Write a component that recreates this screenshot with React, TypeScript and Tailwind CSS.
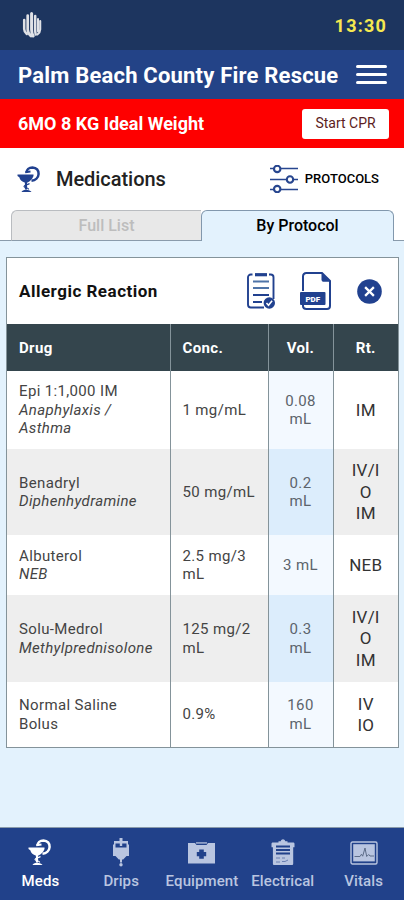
import { ReactNode } from 'react';
import clsx from 'clsx';

type Drug = {
  name: string;
  detail?: string;
  conc: string;
  vol: string;
  routes: string[];
  height: string;
};

type NavItem = {
  label: string;
  icon: ReactNode;
};

const drugs: Drug[] = [
  {
    name: 'Epi 1:1,000 IM',
    detail: 'Anaphylaxis / Asthma',
    conc: '1 mg/mL',
    vol: '0.08 mL',
    routes: ['IM'],
    height: 'h-[78px]',
  },
  {
    name: 'Benadryl',
    detail: 'Diphenhydramine',
    conc: '50 mg/mL',
    vol: '0.2 mL',
    routes: ['IV/I', 'O', 'IM'],
    height: 'h-[86px]',
  },
  {
    name: 'Albuterol',
    detail: 'NEB',
    conc: '2.5 mg/3 mL',
    vol: '3 mL',
    routes: ['NEB'],
    height: 'h-[60px]',
  },
  {
    name: 'Solu-Medrol',
    detail: 'Methylprednisolone',
    conc: '125 mg/2 mL',
    vol: '0.3 mL',
    routes: ['IV/I', 'O', 'IM'],
    height: 'h-[87px]',
  },
  {
    name: 'Normal Saline Bolus',
    conc: '0.9%',
    vol: '160 mL',
    routes: ['IV', 'IO'],
    height: 'h-[65px]',
  },
];

function ChaliceIcon({ className }: { className?: string }) {
  return (
    <svg viewBox="0 0 24 27" className={className} fill="none" stroke="currentColor">
      <path d="M.5 8.500h16v1.500C15.300 13 13 15.500 10.500 16.500H7.500C4.500 15.500 3 13.500 2.300 11.200L.5 10z" fill="currentColor" stroke="none" />
      <path d="M9.500 6.800C9.500 3.500 12 1.400 15.500 1.400c4 .1 6.300 3 6.100 6.600-.2 3.700-3.200 6.300-7.100 6.700" strokeWidth="2.500" />
      <path d="M8.300 6.200l5.200-.8" strokeWidth="2" />
      <path d="M9 16v7.500" strokeWidth="2.200" />
      <path d="M12.500 17.500c-1.500 1.500-5.500 1.200-5.500 3 0 1.500 5 1 4.500 3" strokeWidth="1.200" />
      <path d="M4.500 26c.3-1.300 2-2.300 4.500-2.300s5 1 5.500 2.300z" fill="currentColor" stroke="none" />
    </svg>
  );
}

function HandIcon() {
  return (
    <svg viewBox="0 0 20 28" className="h-7 w-5" fill="none" stroke="#dfe1e6" strokeLinecap="round">
      <path d="M2.200 9v9c0 2.500 1.300 4 2.600 5" strokeWidth="2.500" />
      <path d="M5.700 4.500v14c0 3.500 1.600 5 3.200 6.500" strokeWidth="2.700" />
      <path d="M9.600 2.500v16c0 3.500.5 5 1.600 6.500" strokeWidth="3" />
      <path d="M13.200 5v13.500c0 2 .1 3.500.5 5" strokeWidth="2.500" />
      <path d="M16 8v12.500" strokeWidth="2" />
      <path d="M18.200 10v8.500c0 2-.9 3.500-2.800 5" strokeWidth="2.100" />
    </svg>
  );
}

function SlidersIcon() {
  return (
    <svg viewBox="0 0 28 28" className="h-7 w-7" fill="none" stroke="#27468f">
      <path d="M0 3.500h4M10.500 3.500H28M0 14.500h16.500M23.500 14.500H28M0 24.500h4M10.500 24.500H28" strokeWidth="1.500" />
      <circle cx="7.200" cy="3.900" r="3.200" strokeWidth="2.100" />
      <circle cx="20" cy="14.500" r="3.200" strokeWidth="2.100" />
      <circle cx="7.200" cy="24.100" r="3.200" strokeWidth="2.100" />
    </svg>
  );
}

function ChecklistIcon() {
  return (
    <svg viewBox="0 0 28 38" className="h-[38px] w-7" fill="none" stroke="#21418f">
      <path d="M5.500 2.500H3.800C2.200 2.500 1 3.700 1 5.300v27.200C1 34.300 2.200 35.500 3.800 35.500H17M22 2.500h1.700c1.700 0 2.800 1.200 2.800 2.800V27" strokeWidth="1.900" />
      <path d="M8 2.700h12" strokeWidth="3.200" />
      <path d="M6 9.500h16M6 16h16" stroke="#4f74a8" strokeWidth="2.100" />
      <path d="M6 23h16M6 30h9" strokeWidth="2.100" />
      <circle cx="22.300" cy="31" r="5.700" fill="#21418f" stroke="none" />
      <path d="M19.500 31l2 2.200 3.600-4.400" stroke="#fff" strokeWidth="1.600" />
    </svg>
  );
}

function PdfIcon() {
  return (
    <svg viewBox="0 0 32 38" className="h-[38px] w-8" fill="none" stroke="#21418f">
      <path d="M3 19V4.500C3 2.500 4.500 1 6.500 1H22l8 8v25c0 1.700-1.300 3-3 3H6.500C4.500 37 3 35.700 3 34v-2" strokeWidth="2" />
      <path d="M21.500 1v6.500c0 1.500 1 2.300 2.300 2.300H30z" fill="#21418f" stroke="none" />
      <rect x="0" y="20" width="25.500" height="13" rx="1" fill="#21418f" stroke="none" />
      <text x="12.800" y="29.500" textAnchor="middle" fill="#fff" stroke="none" className="font-[Roboto] text-[8px] font-black">
        PDF
      </text>
    </svg>
  );
}

function CloseIcon() {
  return (
    <svg viewBox="0 0 24 24" className="h-[25px] w-[25px]">
      <circle cx="12" cy="12" r="11.800" fill="#21418f" />
      <path d="M7.800 7.800l8.400 8.400M16.200 7.800l-8.400 8.400" stroke="#fff" strokeWidth="2.200" />
    </svg>
  );
}

function DripIcon() {
  return (
    <svg viewBox="0 0 18 29" className="h-[29px] w-[18px]" fill="currentColor">
      <path d="M7.500 0h3v3h5.500v3.500h1V18h-2.500l-3.300 3.500h-4.400L3.500 18H1V6.500h1V3h5.500z" />
      <path d="M3.500 5.500h4.300V8h2.400V5.500h4.300v4h-11z" fill="#21418a" />
      <path d="M8 21h2v3.500H8z" />
      <circle cx="9" cy="26.800" r="1.700" />
    </svg>
  );
}

function KitIcon() {
  return (
    <svg viewBox="0 0 27 22" className="h-[22px] w-[27px]" fill="currentColor">
      <path d="M0 1h7l1.500 2h10L20 1h7v20.500H0z" />
      <path d="M8 0h11v1.800H8z" opacity="0.700" />
      <path d="M11.200 7.500h4.600v2.400h2.400v4.400h-2.400v2.400h-4.600v-2.400H8.800V9.900h2.400z" fill="#21418a" />
    </svg>
  );
}

function ClipboardIcon() {
  return (
    <svg viewBox="0 0 24 27" className="h-[27px] w-6" fill="currentColor">
      <path d="M2 3.500h5.500V2.200h2.200C10.200 1 11 .3 12 .3s1.800.7 2.300 1.900h2.200v1.300H22c.8 0 1.500.5 1.500 1.200v3.500h-1.300v16.500c0 .8-.6 1.300-1.300 1.300H3.200c-.7 0-1.300-.5-1.300-1.300V8.200H.5V4.700C.5 4 1.200 3.500 2 3.500z" />
      <path d="M5 7.500h14M5 11h14M5 14.500h14" stroke="#21418a" strokeWidth="2.100" fill="none" />
      <path d="M5 19h4M11 19h3M5 23h4M11 22.500h3l3-1.500" stroke="#6b80b2" strokeWidth="1" fill="none" />
    </svg>
  );
}

function MonitorIcon() {
  return (
    <svg viewBox="0 0 28 24" className="h-6 w-7">
      <rect x="1" y="1" width="26" height="22" rx="1.500" fill="none" stroke="currentColor" strokeWidth="1.400" />
      <rect x="3.200" y="3.200" width="21.600" height="17.200" fill="currentColor" />
      <path d="M4.500 15.500H10l1.500-2.300 1.200 2L15 7l1.700 8.500 2-2 1.300 1.500h4" fill="none" stroke="#5d6c88" strokeWidth="1" />
    </svg>
  );
}

const navItems: NavItem[] = [
  { label: 'Meds', icon: <ChaliceIcon className="h-[27px] w-6" /> },
  { label: 'Drips', icon: <DripIcon /> },
  { label: 'Equipment', icon: <KitIcon /> },
  { label: 'Electrical', icon: <ClipboardIcon /> },
  { label: 'Vitals', icon: <MonitorIcon /> },
];

function DrugTable() {
  return (
    <table className="w-full table-fixed border-collapse text-[15px] leading-[18.500px] tracking-[0.350px] text-[#444]">
      <colgroup>
        <col className="w-[163px]" />
        <col className="w-[98px]" />
        <col className="w-[65px]" />
        <col />
      </colgroup>
      <thead>
        <tr className="h-[47px] bg-[#34454d] text-left text-white">
          <th className="border-r border-[#84939a] pt-[2px] pl-3">Drug</th>
          <th className="border-r border-[#84939a] pt-[2px] pl-3">Conc.</th>
          <th className="border-r border-[#84939a] pt-[2px] text-center">Vol.</th>
          <th className="pt-[2px] text-center">Rt.</th>
        </tr>
      </thead>
      <tbody>
        {drugs.map((drug, i) => (
          <tr key={drug.name} className={clsx(drug.height, i % 2 === 1 && 'bg-[#eeeeee]')}>
            <td className="border-r border-[#84939a] pr-3 pl-3">
              <p className={drug.detail ? '' : 'w-[110px]'}>{drug.name}</p>
              {drug.detail && <p className="italic">{drug.detail}</p>}
            </td>
            <td className="border-r border-[#84939a] pr-2 pl-3">{drug.conc}</td>
            <td
              className={clsx(
                'border-r border-[#84939a] px-3 text-center text-[#5c646c]',
                i % 2 === 1 ? 'bg-[#dcedfc]' : 'bg-[#f3f9ff]',
              )}
            >
              {drug.vol}
            </td>
            <td className="pt-px text-center text-[17px] leading-[21.500px] tracking-[0.200px] text-[#333]">
              {drug.routes.map((route) => (
                <p key={route}>{route}</p>
              ))}
            </td>
          </tr>
        ))}
      </tbody>
    </table>
  );
}

export default function App() {
  return (
    <div className="flex h-[900px] w-[404px] flex-col overflow-hidden bg-[#e3f2fd] font-[Roboto,sans-serif] text-black">
      <div className="flex h-[50px] shrink-0 items-center justify-between bg-[#1d355f] pr-[17px] pl-[22px]">
        <HandIcon />
        <span className="text-[18px] font-bold tracking-[1.200px] text-[#f5e850]">13:30</span>
      </div>

      <header className="flex h-[49px] shrink-0 items-center justify-between bg-[#234387] pr-[17px] pl-[18px]">
        <h1 className="pt-px text-[22px] font-bold tracking-[0.200px] whitespace-nowrap text-white">
          Palm Beach County Fire Rescue
        </h1>
        <button type="button" aria-label="Menu" className="flex w-[31px] flex-col gap-[5.500px]">
          <span className="h-[2.500px] rounded bg-white" />
          <span className="h-[2.500px] rounded bg-white" />
          <span className="h-[2.500px] rounded bg-white" />
        </button>
      </header>

      <div className="flex h-[49px] shrink-0 items-center justify-between bg-[#fe0000] pr-[15px] pl-[18px]">
        <span className="text-[18px] font-bold text-white">6MO 8 KG Ideal Weight</span>
        <button type="button" className="h-[30px] w-[87px] rounded-[3px] bg-white text-[14px] text-[#5c1c22]">
          Start CPR
        </button>
      </div>

      <div className="flex h-[62px] shrink-0 items-center bg-white pr-[25px] pl-[17px]">
        <ChaliceIcon className="h-[27px] w-6 text-[#21418f]" />
        <h2 className="ml-[15px] text-[20px] font-medium tracking-[-0.050px] text-[#222]">Medications</h2>
        <button type="button" className="ml-auto flex items-center gap-[7px] text-[13px] font-medium">
          <SlidersIcon />
          PROTOCOLS
        </button>
      </div>

      <div className="flex h-[31px] shrink-0 bg-white">
        <div className="w-[11px] border-b border-[#8a9bab]" />
        <button
          type="button"
          className="w-[190px] rounded-tl-md border border-r-0 border-[#b9bcc0] border-b-[#8a9bab] bg-[#e8e8e8] text-[16px] font-medium text-[#bdbdbd]"
        >
          Full List
        </button>
        <button
          type="button"
          className="w-[193px] rounded-t-md border border-b-0 border-[#8298ad] bg-[#e3f2fd] text-[16px] font-medium"
        >
          By Protocol
        </button>
        <div className="flex-1 border-b border-[#8a9bab]" />
      </div>

      <main className="flex-1 px-[6px] pt-[16px]">
        <section className="w-[393px] border border-[#84939a] bg-white">
          <div className="flex h-[66px] items-center pr-4 pl-3">
            <h3 className="pt-[2px] text-[17px] font-bold tracking-[0.500px] text-[#111]">Allergic Reaction</h3>
            <div className="ml-auto flex items-center gap-[25px]">
              <ChecklistIcon />
              <PdfIcon />
              <CloseIcon />
            </div>
          </div>
          <DrugTable />
        </section>
      </main>

      <nav className="grid h-[73px] shrink-0 grid-cols-5 border-t border-[#8a9bab] bg-[#21418a]">
        {navItems.map((item, i) => (
          <button
            key={item.label}
            type="button"
            className={clsx(
              'flex flex-col items-center pt-[9px] text-[15px] font-medium tracking-[0.100px]',
              i === 0 ? 'text-white' : 'text-[#b9c5e0]',
            )}
          >
            <span className="flex h-[31px] items-center">{item.icon}</span>
            <span className="leading-[26px]">{item.label}</span>
          </button>
        ))}
      </nav>
    </div>
  );
}
